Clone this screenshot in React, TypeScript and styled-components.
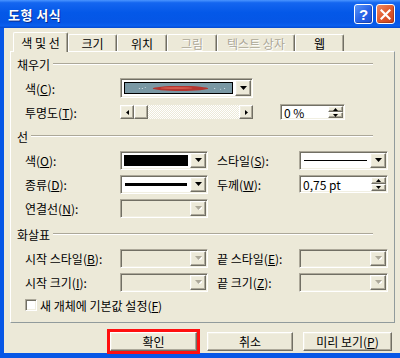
import React from 'react'
import styled, { createGlobalStyle, css } from 'styled-components'

const GlobalStyle = createGlobalStyle`
  html, body {
    margin: 0;
    padding: 0;
  }
  body {
    background: #ece9d8;
    font-family: 'Noto Sans CJK KR', 'Noto Sans', sans-serif;
    font-size: 12px;
    color: #000;
  }
`

const raised = css`
  box-sizing: border-box;
  background: #ece9d8;
  border: 1px solid;
  border-color: #fff #716f64 #716f64 #fff;
  box-shadow: inset -1px -1px 0 #aca899, inset 1px 1px 0 #f1efe2;
`

const sunken = css`
  box-sizing: border-box;
  border: 1px solid;
  border-color: #aca899 #fff #fff #aca899;
  box-shadow: inset 1px 1px 0 #716f64, inset -1px -1px 0 #f1efe2;
  padding: 1px;
`

const Window = styled.div`
  width: 400px;
  height: 358px;
  display: flex;
  flex-direction: column;
  overflow: hidden;
  background: #ece9d8;
`

const TitleBar = styled.div`
  height: 28px;
  flex: none;
  display: flex;
  align-items: center;
  padding: 0 5px 0 8px;
  background: linear-gradient(
    to bottom,
    #4a95ff 0%,
    #1466f0 10%,
    #0458e8 45%,
    #0556e6 80%,
    #0a5fee 92%,
    #0449d0 100%
  );
  .title {
    flex: 1;
    color: #fff;
    font-size: 13px;
    font-weight: bold;
    letter-spacing: 0.5px;
    text-shadow: 1px 1px 0 #0b2a8a;
  }
`

const CaptionBtn = styled.div<{ $kind: 'help' | 'close' }>`
  width: 19px;
  height: 20px;
  box-sizing: border-box;
  margin-left: 3px;
  border: 1px solid #fff;
  border-radius: 3px;
  display: flex;
  align-items: center;
  justify-content: center;
  color: #fff;
  font-family: 'Liberation Sans', sans-serif;
  font-size: 15px;
  font-weight: bold;
  background: ${p =>
    p.$kind === 'help'
      ? 'linear-gradient(135deg, #5b95f7 0%, #2a65e8 50%, #1c4fd6 100%)'
      : 'linear-gradient(135deg, #f08a63 0%, #e05a2e 50%, #c8401e 100%)'};
  box-shadow: inset -1px -1px 0 rgba(0, 0, 0, 0.2);
`

const Frame = styled.div`
  flex: 1;
  display: flex;
  flex-direction: column;
  border-left: 4px solid #0757e6;
  border-bottom: 5px solid #0757e6;
  padding: 4px 5px 0 6px;
`

const TabStrip = styled.div`
  height: 20px;
  display: flex;
  align-items: flex-end;
  padding-left: 3px;
  position: relative;
  z-index: 1;
`

const Tab = styled.div<{ $w: number; $active?: boolean; $off?: boolean }>`
  width: ${p => p.$w}px;
  height: ${p => (p.$active ? 20 : 17)}px;
  margin-bottom: ${p => (p.$active ? 0 : 1)}px;
  box-sizing: border-box;
  display: flex;
  align-items: center;
  justify-content: center;
  padding-top: ${p => (p.$active ? 0 : 1)}px;
  background: #ece9d8;
  border-top: 1px solid #fff;
  border-left: 1px solid #fff;
  border-right: 1px solid #716f64;
  border-radius: 2px 2px 0 0;
  box-shadow: inset -1px 0 0 #aca899;
  color: ${p => (p.$off ? '#aca899' : '#000')};
  text-shadow: ${p => (p.$off ? '1px 1px 0 #fff' : 'none')};
  white-space: nowrap;
`

const Panel = styled.div`
  width: 385px;
  height: 272px;
  margin-top: -1px;
  box-sizing: border-box;
  border: 1px solid;
  border-color: #fff #919b9c #919b9c #fff;
  display: flex;
  flex-direction: column;
`

const Header = styled.div<{ $mt?: number }>`
  height: 24px;
  display: flex;
  align-items: center;
  padding: 0 21px 0 6px;
  margin-top: ${p => p.$mt ?? 0}px;
  &::after {
    content: '';
    flex: 1;
    margin-left: 3px;
    border-top: 1px solid #aca899;
    border-bottom: 1px solid #fff;
  }
`

const Row = styled.div<{ $h?: number }>`
  height: ${p => p.$h ?? 24}px;
  display: flex;
  align-items: center;
  padding-left: 14px;
`

const Label = styled.span<{ $w: number; $ml?: number }>`
  width: ${p => p.$w}px;
  margin-left: ${p => p.$ml ?? 0}px;
  flex: none;
  white-space: nowrap;
`

const Combo = styled.div<{ $w: number; $h: number; $off?: boolean }>`
  ${sunken};
  width: ${p => p.$w}px;
  height: ${p => p.$h}px;
  flex: none;
  display: flex;
  background: ${p => (p.$off ? '#ece9d8' : '#fff')};
`

const ComboValue = styled.div`
  flex: 1;
  display: flex;
  align-items: center;
  padding: 2px;
  box-sizing: border-box;
`

const Swatch = styled.div`
  flex: 1;
  height: 100%;
  box-sizing: border-box;
  border: 1px solid #000;
  background: #000;
  display: flex;
`

const Stroke = styled.div<{ $t: number }>`
  flex: 1;
  height: ${p => p.$t}px;
  background: #000;
  margin: 0 1px;
`

const DropBtn = styled.div`
  ${raised};
  width: 16px;
  flex: none;
  display: flex;
  align-items: center;
  justify-content: center;
`

const Slider = styled.div`
  width: 133px;
  height: 14px;
  flex: none;
  display: flex;
  background: repeating-conic-gradient(#fff 0 25%, #ece9d8 0 50%) 0 0 / 2px 2px;
`

const SliderBtn = styled.div`
  ${raised};
  width: 14px;
  flex: none;
  display: flex;
  align-items: center;
  justify-content: center;
`

const Track = styled.div`
  flex: 1;
`

const Spin = styled.div<{ $w: number; $h: number; $ml?: number }>`
  ${sunken};
  width: ${p => p.$w}px;
  height: ${p => p.$h}px;
  margin-left: ${p => p.$ml ?? 0}px;
  flex: none;
  display: flex;
  background: #fff;
`

const SpinText = styled.span`
  flex: 1;
  display: flex;
  align-items: center;
  padding-left: 2px;
  font-size: 12px;
  white-space: nowrap;
`

const SpinBtns = styled.div`
  width: 15px;
  flex: none;
  display: flex;
  flex-direction: column;
`

const SpinBtn = styled.div`
  ${raised};
  flex: 1;
  display: flex;
  align-items: center;
  justify-content: center;
`

const Check = styled.div`
  ${sunken};
  width: 12px;
  height: 12px;
  flex: none;
  background: #fff;
  margin-right: 3px;
`

const Footer = styled.div`
  display: flex;
  justify-content: flex-end;
  gap: 10px;
  padding: 9px 3px 0 0;
`

const Button = styled.div<{ $w: number; $focus?: boolean }>`
  ${raised};
  width: ${p => p.$w}px;
  height: 19px;
  display: flex;
  align-items: center;
  justify-content: center;
  white-space: nowrap;
  outline: ${p => (p.$focus ? '3px solid #ff1010' : 'none')};
`

type Dir = 'down' | 'up' | 'left' | 'right'

const Arrow = ({ dir = 'down', off, small }: { dir?: Dir; off?: boolean; small?: boolean }) => {
  const s = small ? 5 : 7
  const h = small ? 3 : 4
  const vertical = dir === 'down' || dir === 'up'
  const pts = {
    down: `0,0 ${s},0 ${s / 2},${h}`,
    up: `0,${h} ${s},${h} ${s / 2},0`,
    left: `${h},0 ${h},${s} 0,${s / 2}`,
    right: `0,0 0,${s} ${h},${s / 2}`,
  }[dir]
  return (
    <svg width={vertical ? s : h} height={vertical ? h : s} viewBox={`0 0 ${vertical ? s : h} ${vertical ? h : s}`}>
      {off && <polygon points={pts} fill="#fff" transform="translate(1,1)" />}
      <polygon points={pts} fill={off ? '#aca899' : '#000'} />
    </svg>
  )
}

const ColorFill = () => (
  <svg width="100%" height="100%" viewBox="0 0 108 12" preserveAspectRatio="none">
    <rect width="108" height="12" fill="#7a98a4" />
    <ellipse cx="56" cy="6.5" rx="28" ry="3" fill="#b3352f" />
    <ellipse cx="52" cy="6" rx="16" ry="1.2" fill="#d25a4d" />
    <rect x="14" y="6" width="1" height="1" fill="#e8f0f2" />
    <rect x="17" y="6" width="1" height="1" fill="#e8f0f2" />
    <rect x="20" y="5" width="1" height="1" fill="#cfdde2" />
    <rect x="90" y="6" width="1" height="1" fill="#e8f0f2" />
    <rect x="96" y="7" width="1" height="1" fill="#cfdde2" />
    <rect x="100" y="6" width="1" height="1" fill="#e8f0f2" />
  </svg>
)

const CloseIcon = () => (
  <svg width="11" height="11" viewBox="0 0 11 11">
    <path d="M1.5 1.5 L9.5 9.5 M9.5 1.5 L1.5 9.5" stroke="#fff" strokeWidth="2.2" strokeLinecap="square" />
  </svg>
)

const ComboBox = ({ w, h = 19, off, children }: { w: number; h?: number; off?: boolean; children?: React.ReactNode }) => (
  <Combo $w={w} $h={h} $off={off}>
    <ComboValue>{children}</ComboValue>
    <DropBtn>
      <Arrow off={off} />
    </DropBtn>
  </Combo>
)

const SpinBox = ({ w, h, ml, value }: { w: number; h: number; ml?: number; value: string }) => (
  <Spin $w={w} $h={h} $ml={ml}>
    <SpinText>{value}</SpinText>
    <SpinBtns>
      <SpinBtn>
        <Arrow dir="up" small />
      </SpinBtn>
      <SpinBtn>
        <Arrow dir="down" small />
      </SpinBtn>
    </SpinBtns>
  </Spin>
)

const tabs = [
  { label: '색 및 선', w: 55, active: true },
  { label: '크기', w: 49 },
  { label: '위치', w: 50 },
  { label: '그림', w: 50, off: true },
  { label: '텍스트 상자', w: 78, off: true },
  { label: '웹', w: 49 },
]

const App: React.FC = () => {
  return (
    <Window>
      <GlobalStyle />
      <TitleBar>
        <span className="title">도형 서식</span>
        <CaptionBtn $kind="help">?</CaptionBtn>
        <CaptionBtn $kind="close">
          <CloseIcon />
        </CaptionBtn>
      </TitleBar>
      <Frame>
        <TabStrip>
          {tabs.map(t => (
            <Tab key={t.label} $w={t.w} $active={t.active} $off={t.off}>
              {t.label}
            </Tab>
          ))}
        </TabStrip>
        <Panel>
          <Header>채우기</Header>
          <Row>
            <Label $w={95}>
              색(<u>C</u>):
            </Label>
            <ComboBox w={133} h={20}>
              <Swatch>
                <ColorFill />
              </Swatch>
            </ComboBox>
          </Row>
          <Row>
            <Label $w={95}>
              투명도(<u>T</u>):
            </Label>
            <Slider>
              <SliderBtn>
                <Arrow dir="left" small />
              </SliderBtn>
              <SliderBtn />
              <Track />
              <SliderBtn>
                <Arrow dir="right" small />
              </SliderBtn>
            </Slider>
            <SpinBox w={65} h={16} ml={27} value="0 %" />
          </Row>

          <Header>선</Header>
          <Row>
            <Label $w={95}>
              색(<u>O</u>):
            </Label>
            <ComboBox w={88}>
              <Swatch />
            </ComboBox>
            <Label $w={82} $ml={9}>
              스타일(<u>S</u>):
            </Label>
            <ComboBox w={89}>
              <Stroke $t={1} />
            </ComboBox>
          </Row>
          <Row>
            <Label $w={95}>
              종류(<u>D</u>):
            </Label>
            <ComboBox w={88}>
              <Stroke $t={3} />
            </ComboBox>
            <Label $w={82} $ml={9}>
              두께(<u>W</u>):
            </Label>
            <SpinBox w={89} h={18} value="0,75 pt" />
          </Row>
          <Row>
            <Label $w={95}>
              연결선(<u>N</u>):
            </Label>
            <ComboBox w={88} off />
          </Row>

          <Header $mt={2}>화살표</Header>
          <Row>
            <Label $w={95}>
              시작 스타일(<u>B</u>):
            </Label>
            <ComboBox w={88} off />
            <Label $w={82} $ml={9}>
              끝 스타일(<u>E</u>):
            </Label>
            <ComboBox w={89} off />
          </Row>
          <Row>
            <Label $w={95}>
              시작 크기(<u>I</u>):
            </Label>
            <ComboBox w={88} off />
            <Label $w={82} $ml={9}>
              끝 크기(<u>Z</u>):
            </Label>
            <ComboBox w={89} off />
          </Row>
          <Row $h={22}>
            <Check />
            <span>
              새 개체에 기본값 설정(<u>F</u>)
            </span>
          </Row>
        </Panel>
        <Footer>
          <Button $w={87} $focus>
            확인
          </Button>
          <Button $w={86}>취소</Button>
          <Button $w={89}>
            미리 보기(<u>P</u>)
          </Button>
        </Footer>
      </Frame>
    </Window>
  )
}

export default App
